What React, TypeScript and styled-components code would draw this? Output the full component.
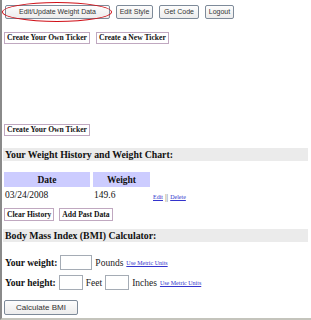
import React from "react";
import styled, { createGlobalStyle } from "styled-components";

const Global = createGlobalStyle`
  html, body { margin: 0; padding: 0; background: #fff; }
  #root { width: 311px; height: 320px; overflow: hidden; }
`;

const Page = styled.div`
  box-sizing: border-box;
  width: 311px;
  height: 320px;
  border-left: 2px solid #8a8a8a;
  border-bottom: 2px solid #c4c4bc;
  padding: 5px 3px 0 2px;
  display: flex;
  flex-direction: column;
  font-family: "Liberation Serif", "Times New Roman", serif;
  color: #111;
`;

const Toolbar = styled.div`
  display: flex;
  align-items: center;
  gap: 6px;
  padding-left: 1px;
  height: 14px;
`;

const Circled = styled.div`
  position: relative;
  display: flex;
`;

const Ellipse = styled.div`
  position: absolute;
  left: -3px;
  top: -3px;
  right: -2px;
  bottom: -3px;
  border: 1.5px solid #d01018;
  border-radius: 50%;
  pointer-events: none;
`;

const GreyButton = styled.button<{ $w: number; $h?: number; $fs?: number }>`
  box-sizing: border-box;
  width: ${(p) => p.$w}px;
  height: ${(p) => p.$h ?? 14}px;
  padding: 0;
  border: 1px solid #7d8a99;
  border-radius: 2px;
  background: linear-gradient(#fdfdfd, #ececec);
  font-family: "Liberation Sans", Arial, sans-serif;
  font-size: ${(p) => p.$fs ?? 7}px;
  color: #333;
  line-height: 12px;
`;

const TickerRow = styled.div<{ $mt: number }>`
  display: flex;
  gap: 6px;
  margin-top: ${(p) => p.$mt}px;
`;

const BoxButton = styled.button<{ $h?: number }>`
  box-sizing: border-box;
  height: ${(p) => p.$h ?? 12}px;
  padding: 0 2px;
  border: 1px solid #c0a8c0;
  background: #fff;
  font-family: "Liberation Serif", "Times New Roman", serif;
  font-weight: bold;
  font-size: 7.6px;
  line-height: 10px;
  color: #111;
`;

const Heading = styled.div<{ $mt: number }>`
  margin-top: ${(p) => p.$mt}px;
  margin-left: -1px;
  height: 13px;
  background: #ebebeb;
  font-weight: bold;
  font-size: 9.8px;
  line-height: 13px;
  padding-left: 2px;
`;

const Table = styled.div`
  display: grid;
  grid-template-columns: 86px 57px auto;
  column-gap: 3px;
  margin-top: 11px;
  align-items: center;
`;

const HeadCell = styled.div`
  background: #ccccff;
  height: 15px;
  text-align: center;
  font-weight: bold;
  font-size: 9.5px;
  line-height: 16px;
`;

const DataCell = styled.div`
  font-size: 9.5px;
  height: 17px;
  line-height: 17px;
  padding-left: 1px;
`;

const Links = styled.div`
  padding-top: 3px;
  color: #555;
  font-size: 8px;
  display: flex;
  align-items: center;
  gap: 2px;
`;

const Link = styled.a`
  color: #3333cc;
  text-decoration: underline;
  font-size: 6px;
  cursor: pointer;
`;

const ButtonRow = styled.div`
  display: flex;
  gap: 5px;
  margin-top: 4px;
`;

const Form = styled.div`
  display: flex;
  flex-direction: column;
  gap: 5px;
  margin-top: 13px;
  padding-left: 1px;
`;

const FormRow = styled.div`
  display: flex;
  align-items: center;
  gap: 3px;
  font-size: 9.5px;
  height: 15px;
`;

const Label = styled.span`
  font-weight: bold;
`;

const Input = styled.div<{ $w: number }>`
  box-sizing: border-box;
  width: ${(p) => p.$w}px;
  height: 15px;
  border: 1px solid #a5acb5;
  background: #fff;
`;

const Unit = styled.span`
  color: #222;
`;

const SubmitRow = styled.div`
  display: flex;
  margin-top: 10px;
`;

export default function App() {
  return (
    <>
      <Global />
      <Page>
        <Toolbar>
          <Circled>
            <GreyButton $w={105}>Edit/Update Weight Data</GreyButton>
            <Ellipse />
          </Circled>
          <GreyButton $w={37}>Edit Style</GreyButton>
          <GreyButton $w={40}>Get Code</GreyButton>
          <GreyButton $w={29}>Logout</GreyButton>
        </Toolbar>
        <TickerRow $mt={13}>
          <BoxButton>Create Your Own Ticker</BoxButton>
          <BoxButton>Create a New Ticker</BoxButton>
        </TickerRow>
        <TickerRow $mt={80}>
          <BoxButton>Create Your Own Ticker</BoxButton>
        </TickerRow>
        <Heading $mt={12}>Your Weight History and Weight Chart:</Heading>
        <Table>
          <HeadCell>Date</HeadCell>
          <HeadCell>Weight</HeadCell>
          <div />
          <DataCell>03/24/2008</DataCell>
          <DataCell>149.6</DataCell>
          <Links>
            <Link>Edit</Link>
            <span>||</span>
            <Link>Delete</Link>
          </Links>
        </Table>
        <ButtonRow>
          <BoxButton $h={13}>Clear History</BoxButton>
          <BoxButton $h={13}>Add Past Data</BoxButton>
        </ButtonRow>
        <Heading $mt={8}>Body Mass Index (BMI) Calculator:</Heading>
        <Form>
          <FormRow>
            <Label>Your weight:</Label>
            <Input $w={32} />
            <Unit>Pounds</Unit>
            <Link>Use Metric Units</Link>
          </FormRow>
          <FormRow>
            <Label>Your height:</Label>
            <Input $w={24} />
            <Unit>Feet</Unit>
            <Input $w={24} />
            <Unit>Inches</Unit>
            <Link>Use Metric Units</Link>
          </FormRow>
        </Form>
        <SubmitRow>
          <GreyButton $w={74} $h={15} $fs={8}>
            Calculate BMI
          </GreyButton>
        </SubmitRow>
      </Page>
    </>
  );
}
